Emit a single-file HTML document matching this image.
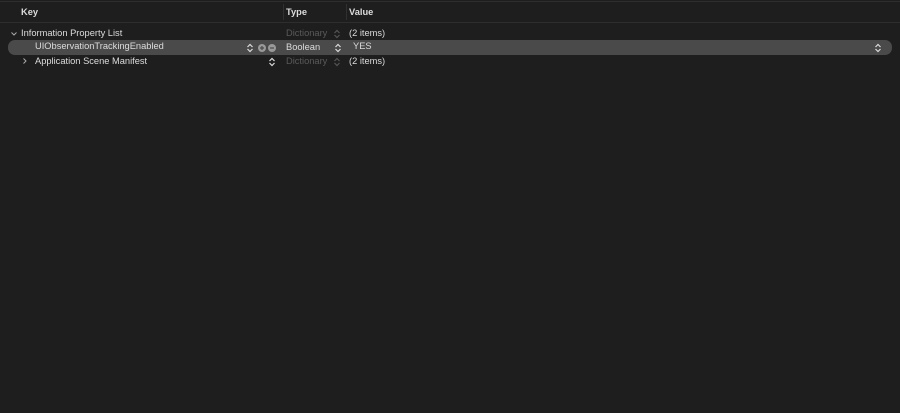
<!DOCTYPE html><html><head><style>
body{margin:0;width:900px;height:413px;background:#1e1e1e;font-family:"Liberation Sans",sans-serif;font-size:9.3px;color:#dcdcdc;position:relative;overflow:hidden}
.a{position:absolute;white-space:nowrap;line-height:11px}
.g{color:#5a5a5a}
.ud{position:absolute;width:8px;height:10px}
</style></head><body>
<div class="a" style="left:0;top:1px;width:900px;height:1px;background:#2e2e2e"></div>
<div class="a" style="left:0;top:22px;width:900px;height:1px;background:#2e2e2e"></div>
<div class="a" style="left:283px;top:4px;width:1px;height:16px;background:#303030"></div>
<div class="a" style="left:346px;top:4px;width:1px;height:16px;background:#303030"></div>
<div class="a" style="left:21px;top:7px;font-weight:bold">Key</div>
<div class="a" style="left:286px;top:7px;font-weight:bold">Type</div>
<div class="a" style="left:349px;top:7px;font-weight:bold">Value</div>
<div class="a" style="left:8px;top:40px;width:884px;height:15px;background:#4a4a4a;border-radius:7px"></div>
<svg class="a" style="left:10px;top:30px" width="8" height="8"><path d="M1.5 2.5L4 5L6.5 2.5" stroke="#aaa" fill="none" stroke-width="1"/></svg>
<div class="a" style="left:21px;top:28px">Information Property List</div>
<div class="a g" style="left:286px;top:28px">Dictionary</div>
<div class="a" style="left:349px;top:28px">(2 items)</div>
<div class="a" style="left:35px;top:41px">UIObservationTrackingEnabled</div>
<div class="a" style="left:286px;top:42px">Boolean</div>
<div class="a" style="left:353px;top:41px">YES</div>
<svg class="a" style="left:21px;top:57px" width="8" height="8"><path d="M2.5 1.5L5 4L2.5 6.5" stroke="#aaa" fill="none" stroke-width="1"/></svg>
<div class="a" style="left:35px;top:56px">Application Scene Manifest</div>
<div class="a g" style="left:286px;top:56px">Dictionary</div>
<div class="a" style="left:349px;top:56px">(2 items)</div>
<svg width="0" height="0" style="position:absolute"><defs><path id="ud" d="M1.5 4L4 1.5L6.5 4M1.5 6L4 8.5L6.5 6" fill="none" stroke-width="1.2"/></defs></svg>
<svg class="ud" style="left:333px;top:29px"><use href="#ud" stroke="#555"/></svg>
<svg class="ud" style="left:246px;top:43px"><use href="#ud" stroke="#ddd"/></svg>
<svg class="ud" style="left:334px;top:43px"><use href="#ud" stroke="#ddd"/></svg>
<svg class="ud" style="left:874px;top:43px"><use href="#ud" stroke="#ddd"/></svg>
<svg class="ud" style="left:268px;top:57px"><use href="#ud" stroke="#ddd"/></svg>
<svg class="ud" style="left:333px;top:57px"><use href="#ud" stroke="#555"/></svg>
<svg class="a" style="left:257px;top:43px" width="22" height="10"><circle cx="5" cy="5" r="4" fill="#999"/><path d="M3 5H7M5 3V7" stroke="#4a4a4a" stroke-width="1.2"/><circle cx="15" cy="5" r="4" fill="#999"/><path d="M13 5H17" stroke="#4a4a4a" stroke-width="1.2"/></svg>
</body></html>
